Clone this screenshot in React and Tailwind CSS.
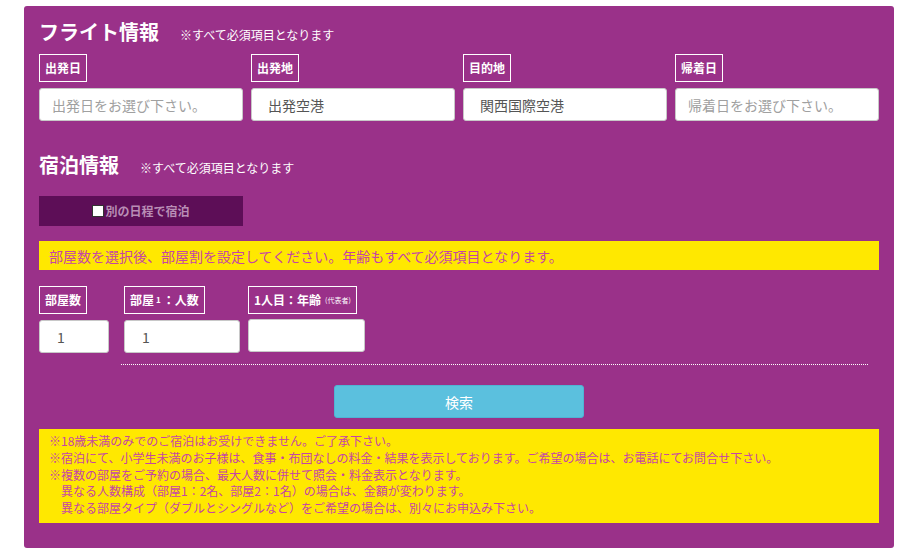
import React from "react";

const font = { fontFamily: '"Noto Sans CJK JP", "Noto Sans", sans-serif' };

/* ================= LABEL ================= */
function Label({ children }) {
  return (
    <div className="inline-flex h-[28px] items-center border border-white px-[5px] text-[12px] font-bold leading-none text-white">
      {children}
    </div>
  );
}

/* ================= INPUT BOX ================= */
function Box({ value, placeholder, className = "" }) {
  return (
    <div
      className={`flex h-[33px] items-center rounded-[3px] border border-[#c8c8c8] bg-white text-[14px] leading-none ${className}`}
    >
      {value ? (
        <span className="text-[#555]">{value}</span>
      ) : (
        <span className="text-[#a0a0a0]">{placeholder}</span>
      )}
    </div>
  );
}

const notes = [
  "※18歳未満のみでのご宿泊はお受けできません。ご了承下さい。",
  "※宿泊にて、小学生未満のお子様は、食事・布団なしの料金・結果を表示しております。ご希望の場合は、お電話にてお問合せ下さい。",
  "※複数の部屋をご予約の場合、最大人数に併せて照会・料金表示となります。",
  "　異なる人数構成（部屋1：2名、部屋2：1名）の場合は、金額が変わります。",
  "　異なる部屋タイプ（ダブルとシングルなど）をご希望の場合は、別々にお申込み下さい。",
];

export default function App() {
  return (
    <div className="min-h-screen bg-white pl-[24px] pt-[6px]" style={font}>
      <div className="flex h-[542px] w-[870px] flex-col rounded-[3px] bg-[#9a3189] px-[15px] pt-[14px]">
        {/* FLIGHT */}
        <div className="flex items-end">
          <h2 className="text-[20px] font-bold leading-[24px] text-white">フライト情報</h2>
          <span className="mb-[3px] ml-[21px] text-[12px] leading-none text-white">
            ※すべて必須項目となります
          </span>
        </div>

        <div className="mt-[10px] grid grid-cols-4 gap-x-[8px]">
          {[
            ["出発日", "", "出発日をお選び下さい。", "pl-[12px]"],
            ["出発地", "出発空港", "", "pl-[16px]"],
            ["目的地", "関西国際空港", "", "pl-[16px]"],
            ["帰着日", "", "帰着日をお選び下さい。", "pl-[12px]"],
          ].map(([label, value, ph, pad]) => (
            <div key={label} className="flex flex-col items-start">
              <Label>{label}</Label>
              <Box value={value} placeholder={ph} className={`mt-[6px] w-full ${pad}`} />
            </div>
          ))}
        </div>

        {/* HOTEL */}
        <div className="mt-[32px] flex items-end">
          <h2 className="text-[20px] font-bold leading-[24px] text-white">宿泊情報</h2>
          <span className="mb-[3px] ml-[21px] text-[12px] leading-none text-white">
            ※すべて必須項目となります
          </span>
        </div>

        <button className="mt-[19px] flex h-[30px] w-[204px] items-center justify-center bg-[#5d0e57] text-[12px] font-bold leading-none text-[#b98db5]">
          <span className="mr-[1px] inline-block h-[12px] w-[12px] border border-[#333] bg-white" />
          別の日程で宿泊
        </button>

        <div className="mt-[15px] flex h-[29px] items-center bg-[#ffe800] pl-[10px] text-[14px] leading-none text-[#c545a6]">
          部屋数を選択後、部屋割を設定してください。年齢もすべて必須項目となります。
        </div>

        <div className="mt-[16px] flex items-start">
          <div className="flex flex-col items-start">
            <Label>部屋数</Label>
            <Box value="1" className="mt-[6px] w-[70px] pl-[17px]" />
          </div>
          <div className="ml-[15px] flex flex-col items-start">
            <Label>
              部屋<span className="mx-[2px] text-[8px]">1</span>：人数
            </Label>
            <Box value="1" className="mt-[6px] w-[116px] pl-[17px]" />
          </div>
          <div className="ml-[8px] flex flex-col items-start">
            <Label>
              1人目：年齢
              <span className="ml-[4px] text-[7px] font-normal">(代表者)</span>
            </Label>
            <Box className="mt-[5px] w-[117px]" />
          </div>
        </div>

        <div className="ml-[82px] mt-[11px] w-[747px] border-t border-dotted border-white" />

        <button className="mx-auto mt-[20px] flex h-[33px] w-[250px] items-center justify-center rounded-[3px] border border-[#4fb3d4] bg-[#5bc0de] text-[14px] leading-none text-white">
          検索
        </button>

        <div className="mt-[11px] h-[94px] bg-[#ffe800] pl-[10px] pt-[4px] text-[12px] leading-[16.75px] text-[#c545a6]">
          {notes.map((n) => (
            <div key={n} className="whitespace-pre">{n}</div>
          ))}
        </div>
      </div>
    </div>
  );
}
